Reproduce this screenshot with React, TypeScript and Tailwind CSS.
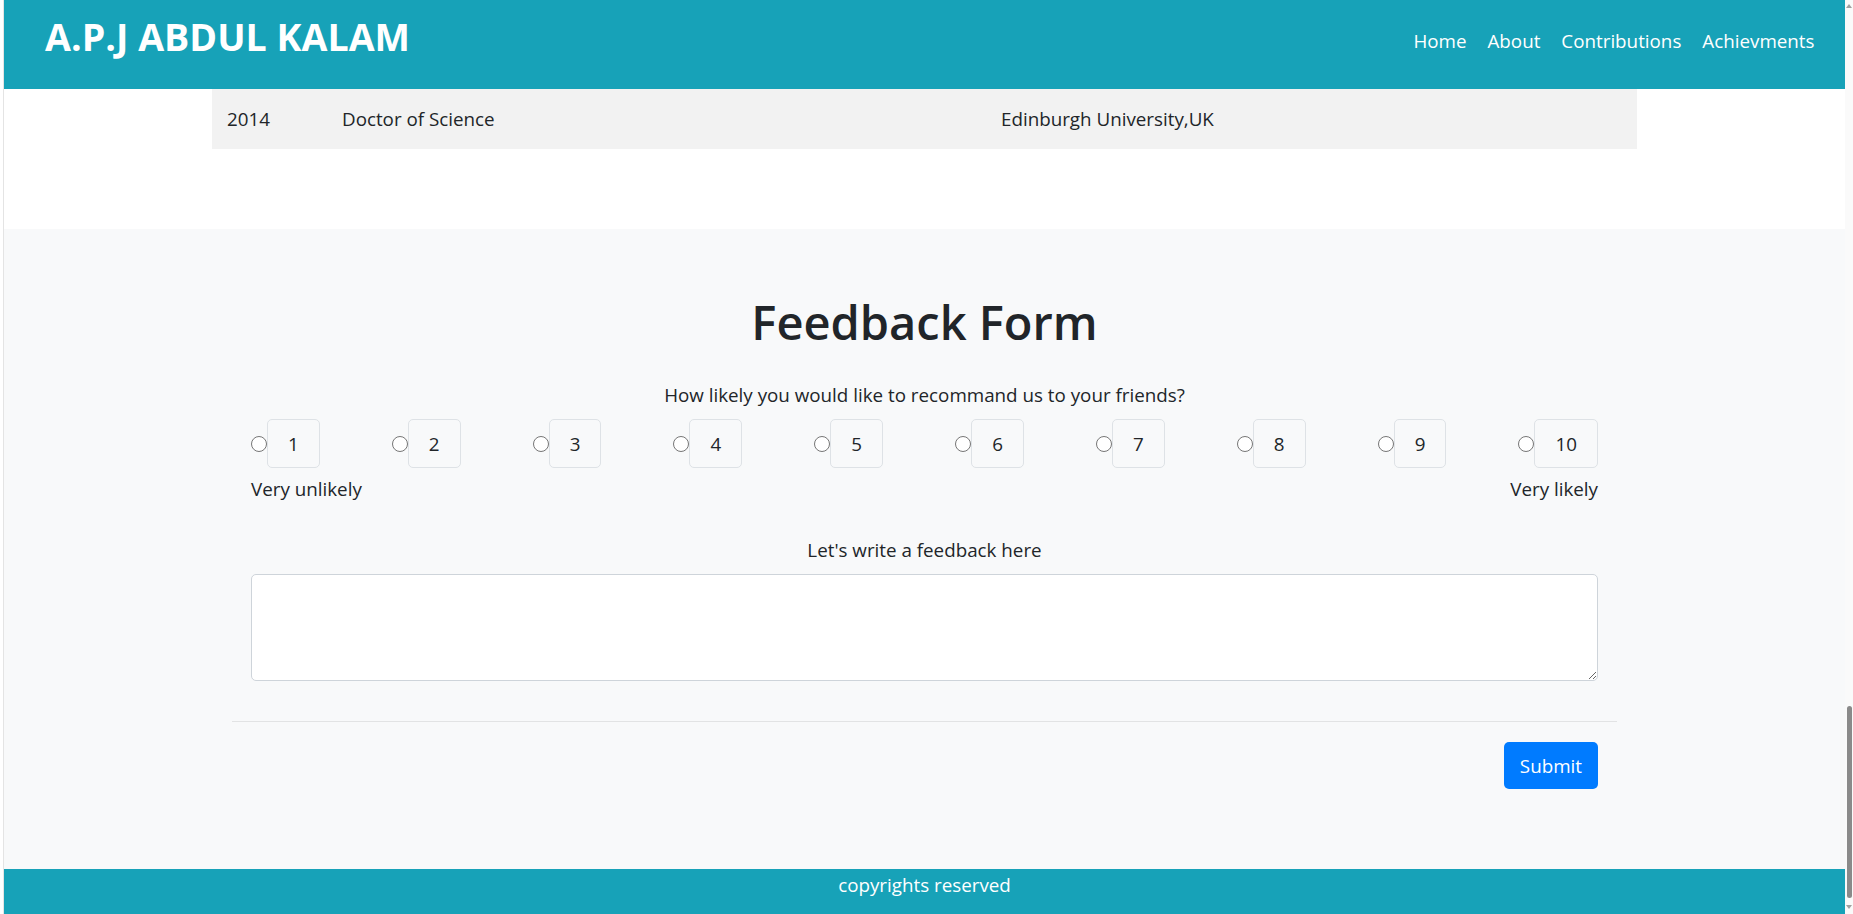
import React from "react";

export default function App() {
  const nums = [1, 2, 3, 4, 5, 6, 7, 8, 9, 10];
  return (
    <div className="flex h-[914px] w-[1853px] overflow-hidden bg-white text-[#212529] [font-family:'Open_Sans','Noto_Sans',sans-serif]">
      <div className="w-[4px] shrink-0 border-r border-[#e4e4e4] bg-white" />
      <div className="flex min-w-0 flex-1 flex-col">
        {/* Header */}
        <header className="flex h-[89px] shrink-0 items-start justify-between bg-[#17a2b8] text-white">
          <h1 className="ml-[41px] mt-[13px] text-[37.6px] font-bold leading-[48px]">A.P.J ABDUL KALAM</h1>
          <nav className="mr-[20px] mt-[26px] flex text-[18.8px] leading-[30px]">
            {["Home", "About", "Contributions", "Achievments"].map((n) => (
              <a key={n} className="px-[10.5px]">{n}</a>
            ))}
          </nav>
        </header>

        {/* Table section */}
        <section className="h-[140px] shrink-0 bg-white">
          <div className="mx-auto grid h-[60px] w-[1425px] grid-cols-[115px_659px_1fr] items-center bg-[#f2f2f2] text-[18.8px] leading-[30px]">
            <div className="pl-[15px]">2014</div>
            <div className="pl-[15px]">Doctor of Science</div>
            <div className="pl-[15px]">Edinburgh University,UK</div>
          </div>
        </section>

        {/* Feedback form */}
        <section className="h-[640px] shrink-0 bg-[#f8f9fa]">
          <div className="mx-auto w-[1385px] pt-[63px]">
            <h2 className="text-center text-[47px] font-semibold leading-[60px] text-[#212529]">Feedback Form</h2>
            <p className="mt-[28px] text-center text-[18.8px] leading-[30px]">How likely you would like to recommand us to your friends?</p>
            <div className="mx-auto w-[1347px]">
              <div className="mt-[9px] flex items-center justify-between">
                {nums.map((n) => (
                  <label key={n} className="flex items-center">
                    <span className="h-[16px] w-[16px] rounded-full border-[1.5px] border-[#767676] bg-white" />
                    <span className="flex h-[49px] items-center rounded-[5px] border border-[#dee2e6] px-[20px] text-[18.8px] leading-[30px]">{n}</span>
                  </label>
                ))}
              </div>
              <div className="mt-[6px] flex justify-between text-[18.8px] leading-[30px]">
                <span>Very unlikely</span>
                <span>Very likely</span>
              </div>
              <p className="mt-[31px] text-center text-[18.8px] leading-[30px]">Let's write a feedback here</p>
              <textarea className="mt-[9px] block h-[107px] w-full rounded-[5px] border border-[#ced4da] bg-white" />
            </div>
            <div className="mt-[40px] border-t border-[#e2e3e4]" />
            <div className="mx-auto flex w-[1347px] justify-end pt-[20px]">
              <button className="h-[47px] rounded-[5px] bg-[#007bff] px-[16px] text-[18.8px] leading-[30px] text-white">Submit</button>
            </div>
          </div>
        </section>

        {/* Footer */}
        <footer className="flex-1 bg-[#17a2b8] pt-[1px] text-center text-[18.8px] leading-[30px] text-white">copyrights reserved</footer>
      </div>
      {/* Scrollbar */}
      <div className="flex w-[8px] shrink-0 flex-col items-center bg-[#fafafa]">
        <svg width="6" height="6" viewBox="0 0 6 6" className="mt-[3px]"><path d="M3 1 L6 5 L0 5 Z" fill="#a0a0a0" /></svg>
        <div className="flex-1" />
        <div className="h-[192px] w-[5px] rounded-full bg-[#8a8a8a]" />
        <svg width="6" height="6" viewBox="0 0 6 6" className="mb-[4px] mt-[6px]"><path d="M0 1 L6 1 L3 5 Z" fill="#a0a0a0" /></svg>
      </div>
    </div>
  );
}
